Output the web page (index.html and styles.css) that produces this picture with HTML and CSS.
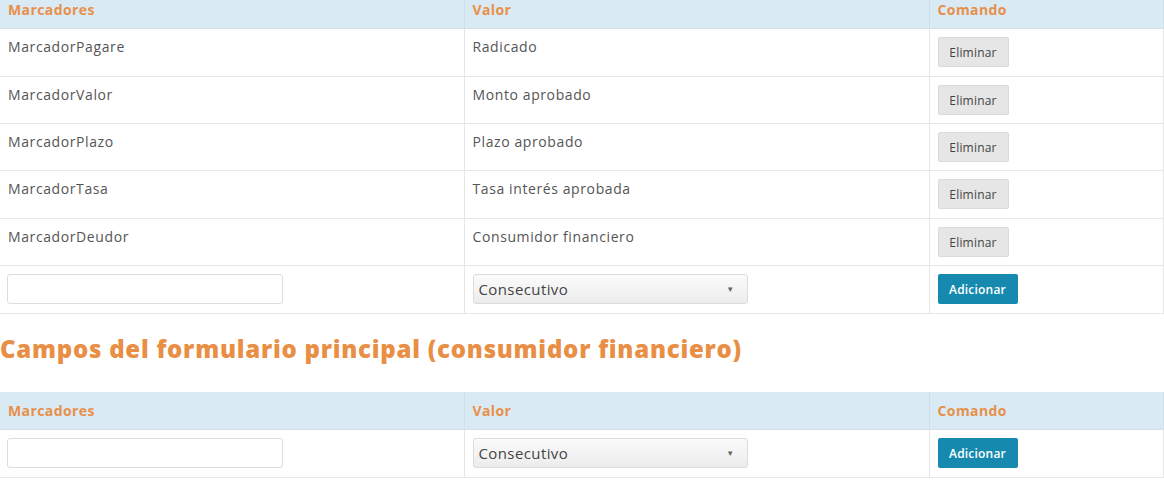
FILE: index.html
```html
<!DOCTYPE html>
<html lang="es">
<head>
<meta charset="utf-8">
<title>Marcadores</title>
<link rel="stylesheet" href="styles.css">
</head>
<body>
<div class="page">
  <table class="grid first">
    <colgroup><col class="c1"><col class="c2"><col class="c3"></colgroup>
    <thead>
      <tr><th>Marcadores</th><th>Valor</th><th>Comando</th></tr>
    </thead>
    <tbody>
      <tr class="tall"><td>MarcadorPagare</td><td>Radicado</td><td><button class="btn btn-del">Eliminar</button></td></tr>
      <tr><td>MarcadorValor</td><td>Monto aprobado</td><td><button class="btn btn-del">Eliminar</button></td></tr>
      <tr><td>MarcadorPlazo</td><td>Plazo aprobado</td><td><button class="btn btn-del">Eliminar</button></td></tr>
      <tr class="tall"><td>MarcadorTasa</td><td>Tasa interés aprobada</td><td><button class="btn btn-del">Eliminar</button></td></tr>
      <tr><td>MarcadorDeudor</td><td>Consumidor financiero</td><td><button class="btn btn-del">Eliminar</button></td></tr>
      <tr class="tall">
        <td><input class="field" type="text"></td>
        <td><div class="select"><span>Consecutivo</span><span class="arrow">▼</span></div></td>
        <td><button class="btn btn-add">Adicionar</button></td>
      </tr>
    </tbody>
  </table>

  <h2 class="section-title">Campos del formulario principal (consumidor financiero)</h2>

  <table class="grid">
    <colgroup><col class="c1"><col class="c2"><col class="c3"></colgroup>
    <thead>
      <tr><th>Marcadores</th><th>Valor</th><th>Comando</th></tr>
    </thead>
    <tbody>
      <tr class="tall">
        <td><input class="field" type="text"></td>
        <td><div class="select"><span>Consecutivo</span><span class="arrow">▼</span></div></td>
        <td><button class="btn btn-add">Adicionar</button></td>
      </tr>
    </tbody>
  </table>
</div>
</body>
</html>
```

FILE: styles.css
```css
html, body {
  margin: 0;
  padding: 0;
  background: #fff;
}
body {
  font-family: "Open Sans", "Liberation Sans", sans-serif;
  color: #555;
  font-size: 14px;
}
.page {
  width: 1163px;
}
.grid {
  width: 1163px;
  border-collapse: collapse;
  table-layout: fixed;
}
.grid.first {
  margin-top: -9px;
}
.c1 { width: 464px; }
.c2 { width: 465px; }
.c3 { width: 234px; }
.grid th {
  background: #d9eaf5;
  color: #e8904a;
  font-weight: 700;
  font-size: 14px;
  letter-spacing: 0.4px;
  text-align: left;
  padding: 9px 8px 8px;
  height: 20px;
  line-height: 20px;
  border-left: 1px solid #cfe0eb;
  border-right: 1px solid #cfe0eb;
  border-bottom: 1px solid #d5dfe6;
}
.grid th:first-child { border-left: none; }
.grid td {
  padding: 8px 8px 8px;
  height: 30px;
  line-height: 20px;
  vertical-align: top;
  border: 1px solid #e6e6e6;
  color: #555;
  letter-spacing: 0.6px;
}
.grid tbody tr.tall td {
  height: 31px;
}
.grid td:first-child { border-left: none; }
.btn {
  display: block;
  height: 30px;
  border: none;
  border-radius: 2px;
  font-family: "Open Sans", "Liberation Sans", sans-serif;
  font-size: 12px;
  cursor: pointer;
  padding: 0;
  letter-spacing: 0.2px;
}
.btn-del {
  width: 71px;
  background: #e6e6e6;
  color: #444;
  border: 1px solid #dadada;
}
.btn-add {
  width: 80px;
  background: #168aae;
  color: #fff;
  font-weight: 600;
}
.field {
  display: block;
  box-sizing: border-box;
  width: 276px;
  height: 30px;
  border: 1px solid #ddd;
  border-radius: 3px;
  margin-left: -1px;
  background: #fff;
}
.select {
  box-sizing: border-box;
  width: 275px;
  height: 30px;
  border: 1px solid #dcdcdc;
  border-radius: 3px;
  background: linear-gradient(#fbfbfb, #ececec);
  display: flex;
  align-items: center;
  justify-content: space-between;
  padding: 0 12px 0 5px;
  font-size: 15px;
  color: #444;
  letter-spacing: 0.4px;
}
.select .arrow {
  font-size: 8px;
  color: #666;
}
.section-title {
  margin: 21px 0 29px;
  font-family: "Open Sans", "Liberation Sans", sans-serif;
  font-weight: 800;
  font-size: 24px;
  line-height: 28px;
  letter-spacing: 0.75px;
  color: #e98f45;
}
```
